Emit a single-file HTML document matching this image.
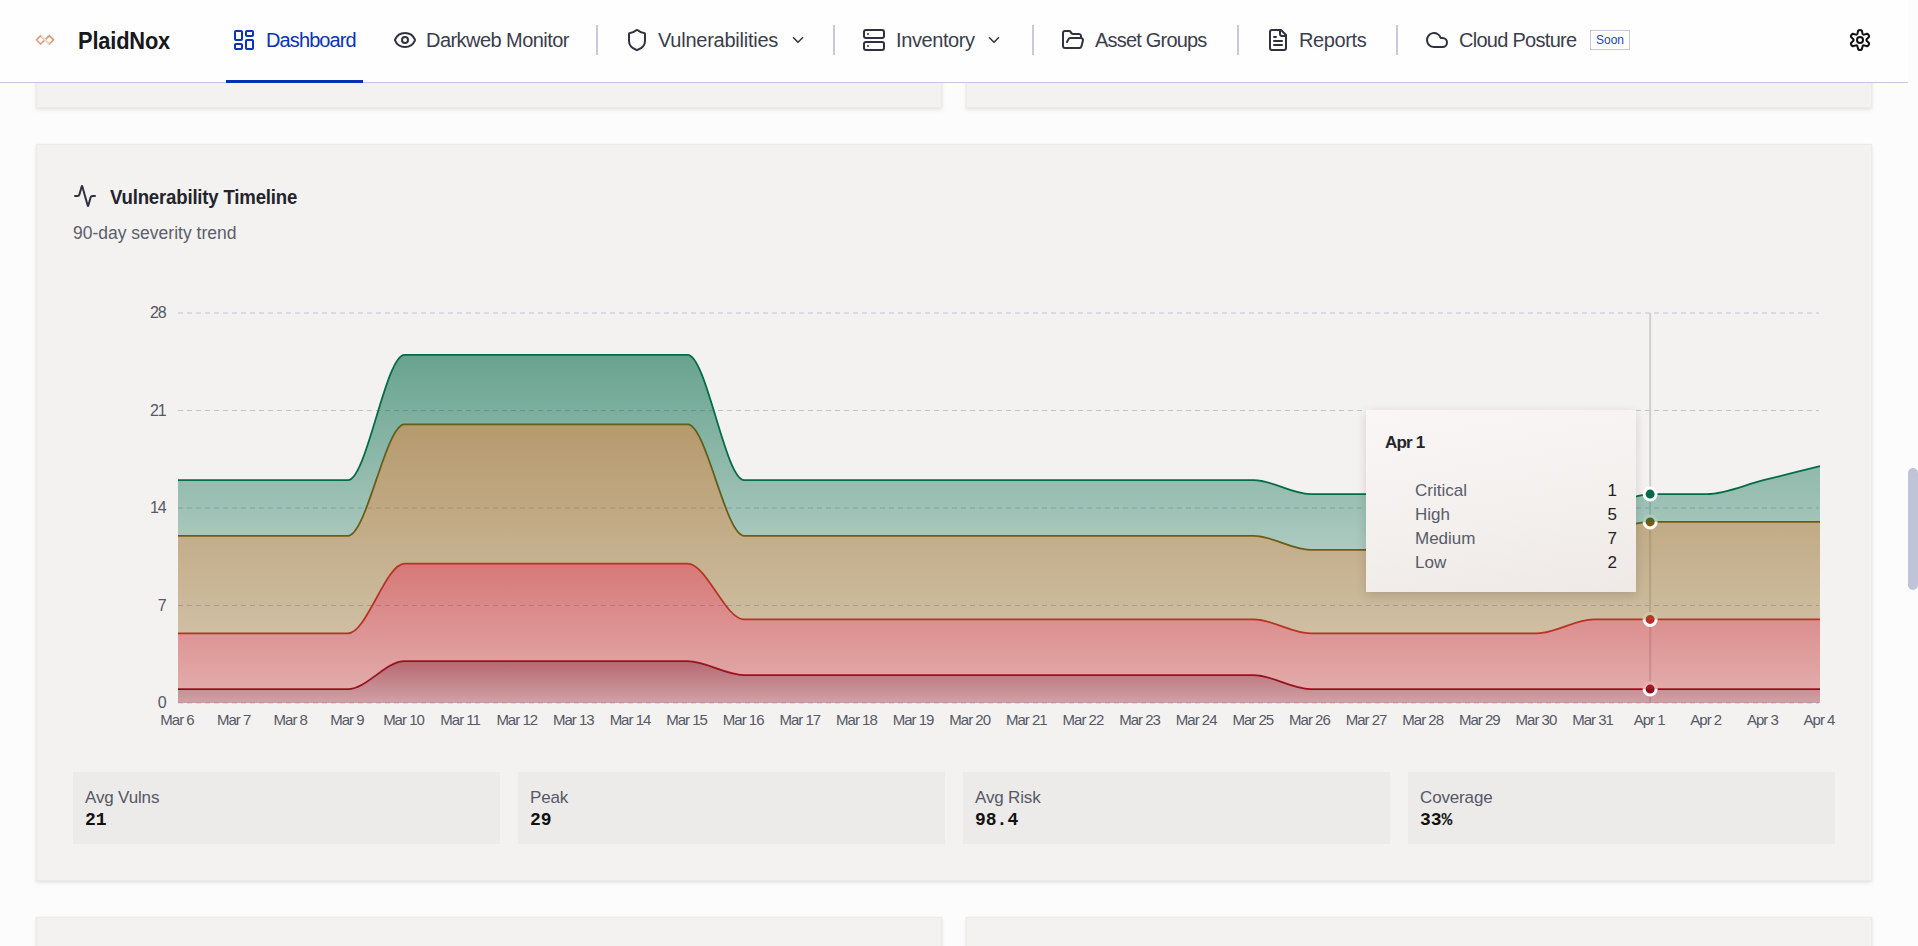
<!DOCTYPE html>
<html><head><meta charset="utf-8">
<style>
*{margin:0;padding:0;box-sizing:border-box}
html,body{width:1918px;height:946px;overflow:hidden;background:#fcfcfc;font-family:"Liberation Sans",sans-serif}
.abs{position:absolute}
#hdr{position:absolute;left:0;top:0;width:1908px;height:83px;background:#fefefe;border-bottom:1px solid #c5c8dc;z-index:5}
.card{position:absolute;background:#f3f2f0;border:1px solid #eceaea;box-shadow:0 2px 4px rgba(0,0,0,0.09),0 0 2px rgba(0,0,0,0.04)}
.nav{position:absolute;top:0;height:82px;font-size:20px;letter-spacing:-0.35px;color:#3b3d4b;white-space:nowrap}
.nav svg{position:absolute}
.nav span{position:absolute;top:30px;line-height:20px}
.sep{position:absolute;top:25px;width:2px;height:30px;background:#c8c9de}
.ic{fill:none;stroke:#2f313e;stroke-width:2;stroke-linecap:round;stroke-linejoin:round}
.stat{position:absolute;top:772px;width:427px;height:72px;background:#edebe9}
.stat .l{position:absolute;left:12px;top:16px;font-size:17px;letter-spacing:-0.15px;color:#555867;line-height:20px}
.stat .v{position:absolute;left:12px;top:38px;font-family:"Liberation Mono",monospace;font-weight:bold;font-size:18px;color:#111;line-height:20px}
#tip{position:absolute;left:1366px;top:410px;width:270px;height:182px;background:linear-gradient(170deg,#f9f6f5 0%,#f2efed 60%,#efe9e6 100%);box-shadow:0 3px 10px rgba(0,0,0,0.14);z-index:3}
#tip .t{position:absolute;left:19px;top:23px;font-size:17px;letter-spacing:-0.8px;font-weight:bold;color:#25252c;line-height:20px}
#tip .r{position:absolute;left:49px;width:202px;font-size:17px;line-height:20px;color:#585b69}
#tip .r b{position:absolute;right:0;top:0;font-weight:normal;color:#222}
</style></head><body>
<!-- top partial cards -->
<div class="card" style="left:36px;top:40px;width:906px;height:68px"></div>
<div class="card" style="left:966px;top:40px;width:906px;height:68px"></div>
<!-- main card -->
<div class="card" style="left:36px;top:144px;width:1836px;height:737px"></div>
<!-- bottom partial cards -->
<div class="card" style="left:36px;top:917px;width:906px;height:100px"></div>
<div class="card" style="left:966px;top:917px;width:906px;height:100px"></div>

<div id="hdr">
  <!-- logo -->
  <svg class="abs" style="left:32px;top:30px" width="24" height="20" viewBox="0 0 24 20">
    <defs><linearGradient id="lg" x1="1" y1="0" x2="0" y2="1"><stop offset="0" stop-color="#d9804c"/><stop offset="1" stop-color="#d9a48a"/></linearGradient></defs>
    <path d="M8.7 5.6 L12.9 9.8 L8.7 14 L4.5 9.8 Z" fill="none" stroke="url(#lg)" stroke-width="1.7" opacity="0.9"/>
    <path d="M17.3 5.6 L21.5 9.8 L17.3 14 L13.1 9.8 Z" fill="none" stroke="url(#lg)" stroke-width="1.7" opacity="0.9"/>
    <path d="M9 5.2 L16.8 14.2" stroke="#e3e0d9" stroke-width="1.8"/>
  </svg>
  <div class="abs" style="left:78px;top:28px;font-size:23.5px;font-weight:bold;color:#17171c;letter-spacing:-0.2px;line-height:26px;transform:scaleX(0.93);transform-origin:0 0">PlaidNox</div>

  <div class="nav" style="left:226px;width:137px">
    <svg style="left:6px;top:28px" width="24" height="24" viewBox="0 0 24 24" class="ic" ><g style="stroke:#0a33b5"><rect width="7" height="9" x="3" y="3" rx="1"/><rect width="7" height="5" x="14" y="3" rx="1"/><rect width="7" height="9" x="14" y="12" rx="1"/><rect width="7" height="5" x="3" y="16" rx="1"/></g></svg>
    <span style="left:40px;color:#0a33b5;letter-spacing:-0.89px">Dashboard</span>
    <div class="abs" style="left:0;top:80px;width:137px;height:3px;background:#0530b5"></div>
  </div>
  <div class="nav" style="left:392px">
    <svg style="left:1px;top:28px" width="24" height="24" viewBox="0 0 24 24" class="ic"><path d="M2.062 12.348a1 1 0 0 1 0-.696 10.75 10.75 0 0 1 19.876 0 1 1 0 0 1 0 .696 10.75 10.75 0 0 1-19.876 0"/><circle cx="12" cy="12" r="3"/></svg>
    <span style="left:34px;letter-spacing:-0.55px">Darkweb Monitor</span>
  </div>
  <div class="sep" style="left:596px"></div>
  <div class="nav" style="left:625px">
    <svg style="left:0px;top:28px" width="24" height="24" viewBox="0 0 24 24" class="ic"><path d="M20 13c0 5-3.5 7.5-7.66 8.95a1 1 0 0 1-.67-.01C7.5 20.5 4 18 4 13V6a1 1 0 0 1 1-1c2 0 4.5-1.2 6.24-2.72a1.17 1.17 0 0 1 1.52 0C14.51 3.81 17 5 19 5a1 1 0 0 1 1 1z"/></svg>
    <span style="left:33px;letter-spacing:-0.25px">Vulnerabilities</span>
    <svg style="left:164px;top:31px" width="18" height="18" viewBox="0 0 24 24" class="ic"><path d="m6 9 6 6 6-6"/></svg>
  </div>
  <div class="sep" style="left:833px"></div>
  <div class="nav" style="left:862px">
    <svg style="left:0px;top:28px" width="24" height="24" viewBox="0 0 24 24" class="ic"><rect width="20" height="8" x="2" y="2" rx="2" ry="2"/><rect width="20" height="8" x="2" y="14" rx="2" ry="2"/><line x1="6" x2="6.01" y1="6" y2="6"/><line x1="6" x2="6.01" y1="18" y2="18"/></svg>
    <span style="left:34px;letter-spacing:-0.4px">Inventory</span>
    <svg style="left:123px;top:31px" width="18" height="18" viewBox="0 0 24 24" class="ic"><path d="m6 9 6 6 6-6"/></svg>
  </div>
  <div class="sep" style="left:1032px"></div>
  <div class="nav" style="left:1061px">
    <svg style="left:0px;top:28px" width="24" height="24" viewBox="0 0 24 24" class="ic"><path d="m6 14 1.5-2.9A2 2 0 0 1 9.24 10H20a2 2 0 0 1 1.94 2.5l-1.54 6a2 2 0 0 1-1.95 1.5H4a2 2 0 0 1-2-2V5a2 2 0 0 1 2-2h3.9a2 2 0 0 1 1.69.9l.81 1.2a2 2 0 0 0 1.67.9H18a2 2 0 0 1 2 2v2"/></svg>
    <span style="left:34px;letter-spacing:-0.8px">Asset Groups</span>
  </div>
  <div class="sep" style="left:1237px"></div>
  <div class="nav" style="left:1266px">
    <svg style="left:0px;top:28px" width="24" height="24" viewBox="0 0 24 24" class="ic"><path d="M15 2H6a2 2 0 0 0-2 2v16a2 2 0 0 0 2 2h12a2 2 0 0 0 2-2V7Z"/><path d="M14 2v4a2 2 0 0 0 2 2h4"/><path d="M10 9H8"/><path d="M16 13H8"/><path d="M16 17H8"/></svg>
    <span style="left:33px;letter-spacing:-0.4px">Reports</span>
  </div>
  <div class="sep" style="left:1396px"></div>
  <div class="nav" style="left:1425px">
    <svg style="left:0px;top:28px" width="24" height="24" viewBox="0 0 24 24" class="ic"><path d="M17.5 19H9a7 7 0 1 1 6.71-9h1.79a4.5 4.5 0 1 1 0 9Z"/></svg>
    <span style="left:34px;letter-spacing:-0.72px">Cloud Posture</span>
  </div>
  <div class="abs" style="left:1590px;top:30px;width:40px;height:20px;border:1px solid #c5c6dc;font-size:12px;color:#1f44b8;text-align:center;line-height:18px">Soon</div>
  <!-- gear -->
  <svg class="abs ic" style="left:1848px;top:28px;stroke:#111;" width="24" height="24" viewBox="0 0 24 24"><path id="gear" d="M9.38,5.83L10.19,2.67Q12.00,1.30 13.81,2.67L14.62,5.83Q15.02,6.78 16.03,6.65L19.17,5.77Q21.27,6.65 20.98,8.91L18.65,11.18Q18.03,12.00 18.65,12.82L20.98,15.09Q21.27,17.35 19.17,18.23L16.03,17.35Q15.02,17.22 14.62,18.17L13.81,21.33Q12.00,22.70 10.19,21.33L9.38,18.17Q8.99,17.22 7.97,17.35L4.83,18.23Q2.73,17.35 3.02,15.09L5.35,12.82Q5.97,12.00 5.35,11.18L3.02,8.91Q2.73,6.65 4.83,5.77L7.97,6.65Q8.99,6.78 9.38,5.83Z"/><circle cx="12" cy="12" r="3"/></svg>
</div>

<!-- chart card content -->
<svg class="abs ic" style="left:73px;top:184px" width="24" height="24" viewBox="0 0 24 24"><path d="M22 12h-2.48a2 2 0 0 0-1.93 1.46l-2.35 8.36a.25.25 0 0 1-.48 0L9.24 2.18a.25.25 0 0 0-.48 0l-2.35 8.36A2 2 0 0 1 4.49 12H2"/></svg>
<div class="abs" style="left:110px;top:186px;font-size:20px;font-weight:bold;color:#23242c;line-height:22px;letter-spacing:-0.2px;transform:scaleX(0.93);transform-origin:0 0">Vulnerability Timeline</div>
<div class="abs" style="left:73px;top:223px;font-size:17.5px;color:#5b5e6b;line-height:20px">90-day severity trend</div>

<svg width="1918" height="946" style="position:absolute;left:0;top:0">
<defs>
<linearGradient id="g_crit" x1="0" y1="0" x2="0" y2="1"><stop offset="0%" stop-color="#8f0d1c" stop-opacity="0.6"/><stop offset="100%" stop-color="#8f0d1c" stop-opacity="0.35"/></linearGradient>
<linearGradient id="g_high" x1="0" y1="0" x2="0" y2="1"><stop offset="0%" stop-color="#c32828" stop-opacity="0.6"/><stop offset="100%" stop-color="#c32828" stop-opacity="0.35"/></linearGradient>
<linearGradient id="g_med" x1="0" y1="0" x2="0" y2="1"><stop offset="0%" stop-color="#8c5f14" stop-opacity="0.6"/><stop offset="100%" stop-color="#8c5f14" stop-opacity="0.35"/></linearGradient>
<linearGradient id="g_low" x1="0" y1="0" x2="0" y2="1"><stop offset="0%" stop-color="#0b6e4f" stop-opacity="0.6"/><stop offset="100%" stop-color="#0b6e4f" stop-opacity="0.3"/></linearGradient>
</defs>
<line x1="178" y1="703.00" x2="1819" y2="703.00" stroke="#c0c1da" stroke-width="1" stroke-dasharray="5 4"/>
<line x1="178" y1="605.50" x2="1819" y2="605.50" stroke="#c0c1da" stroke-width="1" stroke-dasharray="5 4"/>
<line x1="178" y1="508.00" x2="1819" y2="508.00" stroke="#c0c1da" stroke-width="1" stroke-dasharray="5 4"/>
<line x1="178" y1="410.50" x2="1819" y2="410.50" stroke="#c0c1da" stroke-width="1" stroke-dasharray="5 4"/>
<line x1="178" y1="313.00" x2="1819" y2="313.00" stroke="#c0c1da" stroke-width="1" stroke-dasharray="5 4"/>
<line x1="1650.14" y1="313" x2="1650.14" y2="703" stroke="#cfcfcf" stroke-width="2"/>
<path d="M178.00,689.07C196.87,689.07,215.75,689.07,234.62,689.07C253.49,689.07,272.37,689.07,291.24,689.07C310.11,689.07,328.99,689.07,347.86,689.07C366.74,689.07,385.61,661.21,404.48,661.21C423.36,661.21,442.23,661.21,461.10,661.21C479.98,661.21,498.85,661.21,517.72,661.21C536.60,661.21,555.47,661.21,574.34,661.21C593.22,661.21,612.09,661.21,630.97,661.21C649.84,661.21,668.71,661.21,687.59,661.21C706.46,661.21,725.33,675.14,744.21,675.14C763.08,675.14,781.95,675.14,800.83,675.14C819.70,675.14,838.57,675.14,857.45,675.14C876.32,675.14,895.20,675.14,914.07,675.14C932.94,675.14,951.82,675.14,970.69,675.14C989.56,675.14,1008.44,675.14,1027.31,675.14C1046.18,675.14,1065.06,675.14,1083.93,675.14C1102.80,675.14,1121.68,675.14,1140.55,675.14C1159.43,675.14,1178.30,675.14,1197.17,675.14C1216.05,675.14,1234.92,675.14,1253.79,675.14C1272.67,675.14,1291.54,689.07,1310.41,689.07C1329.29,689.07,1348.16,689.07,1367.03,689.07C1385.91,689.07,1404.78,689.07,1423.66,689.07C1442.53,689.07,1461.40,689.07,1480.28,689.07C1499.15,689.07,1518.02,689.07,1536.90,689.07C1555.77,689.07,1574.64,689.07,1593.52,689.07C1612.39,689.07,1631.26,689.07,1650.14,689.07C1669.01,689.07,1687.89,689.07,1706.76,689.07C1725.63,689.07,1744.51,689.07,1763.38,689.07C1782.25,689.07,1801.13,689.07,1820.00,689.07L1820.00,703.00C1801.13,703.00,1782.25,703.00,1763.38,703.00C1744.51,703.00,1725.63,703.00,1706.76,703.00C1687.89,703.00,1669.01,703.00,1650.14,703.00C1631.26,703.00,1612.39,703.00,1593.52,703.00C1574.64,703.00,1555.77,703.00,1536.90,703.00C1518.02,703.00,1499.15,703.00,1480.28,703.00C1461.40,703.00,1442.53,703.00,1423.66,703.00C1404.78,703.00,1385.91,703.00,1367.03,703.00C1348.16,703.00,1329.29,703.00,1310.41,703.00C1291.54,703.00,1272.67,703.00,1253.79,703.00C1234.92,703.00,1216.05,703.00,1197.17,703.00C1178.30,703.00,1159.43,703.00,1140.55,703.00C1121.68,703.00,1102.80,703.00,1083.93,703.00C1065.06,703.00,1046.18,703.00,1027.31,703.00C1008.44,703.00,989.56,703.00,970.69,703.00C951.82,703.00,932.94,703.00,914.07,703.00C895.20,703.00,876.32,703.00,857.45,703.00C838.57,703.00,819.70,703.00,800.83,703.00C781.95,703.00,763.08,703.00,744.21,703.00C725.33,703.00,706.46,703.00,687.59,703.00C668.71,703.00,649.84,703.00,630.97,703.00C612.09,703.00,593.22,703.00,574.34,703.00C555.47,703.00,536.60,703.00,517.72,703.00C498.85,703.00,479.98,703.00,461.10,703.00C442.23,703.00,423.36,703.00,404.48,703.00C385.61,703.00,366.74,703.00,347.86,703.00C328.99,703.00,310.11,703.00,291.24,703.00C272.37,703.00,253.49,703.00,234.62,703.00C215.75,703.00,196.87,703.00,178.00,703.00Z" fill="url(#g_crit)" stroke="none"/>
<path d="M178.00,689.07C196.87,689.07,215.75,689.07,234.62,689.07C253.49,689.07,272.37,689.07,291.24,689.07C310.11,689.07,328.99,689.07,347.86,689.07C366.74,689.07,385.61,661.21,404.48,661.21C423.36,661.21,442.23,661.21,461.10,661.21C479.98,661.21,498.85,661.21,517.72,661.21C536.60,661.21,555.47,661.21,574.34,661.21C593.22,661.21,612.09,661.21,630.97,661.21C649.84,661.21,668.71,661.21,687.59,661.21C706.46,661.21,725.33,675.14,744.21,675.14C763.08,675.14,781.95,675.14,800.83,675.14C819.70,675.14,838.57,675.14,857.45,675.14C876.32,675.14,895.20,675.14,914.07,675.14C932.94,675.14,951.82,675.14,970.69,675.14C989.56,675.14,1008.44,675.14,1027.31,675.14C1046.18,675.14,1065.06,675.14,1083.93,675.14C1102.80,675.14,1121.68,675.14,1140.55,675.14C1159.43,675.14,1178.30,675.14,1197.17,675.14C1216.05,675.14,1234.92,675.14,1253.79,675.14C1272.67,675.14,1291.54,689.07,1310.41,689.07C1329.29,689.07,1348.16,689.07,1367.03,689.07C1385.91,689.07,1404.78,689.07,1423.66,689.07C1442.53,689.07,1461.40,689.07,1480.28,689.07C1499.15,689.07,1518.02,689.07,1536.90,689.07C1555.77,689.07,1574.64,689.07,1593.52,689.07C1612.39,689.07,1631.26,689.07,1650.14,689.07C1669.01,689.07,1687.89,689.07,1706.76,689.07C1725.63,689.07,1744.51,689.07,1763.38,689.07C1782.25,689.07,1801.13,689.07,1820.00,689.07" fill="none" stroke="#8f0d1c" stroke-width="1.75"/>
<circle cx="1650.14" cy="689.07" r="6" fill="#8f0d1c" stroke="#fff" stroke-width="3"/>
<path d="M178.00,633.36C196.87,633.36,215.75,633.36,234.62,633.36C253.49,633.36,272.37,633.36,291.24,633.36C310.11,633.36,328.99,633.36,347.86,633.36C366.74,633.36,385.61,563.71,404.48,563.71C423.36,563.71,442.23,563.71,461.10,563.71C479.98,563.71,498.85,563.71,517.72,563.71C536.60,563.71,555.47,563.71,574.34,563.71C593.22,563.71,612.09,563.71,630.97,563.71C649.84,563.71,668.71,563.71,687.59,563.71C706.46,563.71,725.33,619.43,744.21,619.43C763.08,619.43,781.95,619.43,800.83,619.43C819.70,619.43,838.57,619.43,857.45,619.43C876.32,619.43,895.20,619.43,914.07,619.43C932.94,619.43,951.82,619.43,970.69,619.43C989.56,619.43,1008.44,619.43,1027.31,619.43C1046.18,619.43,1065.06,619.43,1083.93,619.43C1102.80,619.43,1121.68,619.43,1140.55,619.43C1159.43,619.43,1178.30,619.43,1197.17,619.43C1216.05,619.43,1234.92,619.43,1253.79,619.43C1272.67,619.43,1291.54,633.36,1310.41,633.36C1329.29,633.36,1348.16,633.36,1367.03,633.36C1385.91,633.36,1404.78,633.36,1423.66,633.36C1442.53,633.36,1461.40,633.36,1480.28,633.36C1499.15,633.36,1518.02,633.36,1536.90,633.36C1555.77,633.36,1574.64,619.43,1593.52,619.43C1612.39,619.43,1631.26,619.43,1650.14,619.43C1669.01,619.43,1687.89,619.43,1706.76,619.43C1725.63,619.43,1744.51,619.43,1763.38,619.43C1782.25,619.43,1801.13,619.43,1820.00,619.43L1820.00,689.07C1801.13,689.07,1782.25,689.07,1763.38,689.07C1744.51,689.07,1725.63,689.07,1706.76,689.07C1687.89,689.07,1669.01,689.07,1650.14,689.07C1631.26,689.07,1612.39,689.07,1593.52,689.07C1574.64,689.07,1555.77,689.07,1536.90,689.07C1518.02,689.07,1499.15,689.07,1480.28,689.07C1461.40,689.07,1442.53,689.07,1423.66,689.07C1404.78,689.07,1385.91,689.07,1367.03,689.07C1348.16,689.07,1329.29,689.07,1310.41,689.07C1291.54,689.07,1272.67,675.14,1253.79,675.14C1234.92,675.14,1216.05,675.14,1197.17,675.14C1178.30,675.14,1159.43,675.14,1140.55,675.14C1121.68,675.14,1102.80,675.14,1083.93,675.14C1065.06,675.14,1046.18,675.14,1027.31,675.14C1008.44,675.14,989.56,675.14,970.69,675.14C951.82,675.14,932.94,675.14,914.07,675.14C895.20,675.14,876.32,675.14,857.45,675.14C838.57,675.14,819.70,675.14,800.83,675.14C781.95,675.14,763.08,675.14,744.21,675.14C725.33,675.14,706.46,661.21,687.59,661.21C668.71,661.21,649.84,661.21,630.97,661.21C612.09,661.21,593.22,661.21,574.34,661.21C555.47,661.21,536.60,661.21,517.72,661.21C498.85,661.21,479.98,661.21,461.10,661.21C442.23,661.21,423.36,661.21,404.48,661.21C385.61,661.21,366.74,689.07,347.86,689.07C328.99,689.07,310.11,689.07,291.24,689.07C272.37,689.07,253.49,689.07,234.62,689.07C215.75,689.07,196.87,689.07,178.00,689.07Z" fill="url(#g_high)" stroke="none"/>
<path d="M178.00,633.36C196.87,633.36,215.75,633.36,234.62,633.36C253.49,633.36,272.37,633.36,291.24,633.36C310.11,633.36,328.99,633.36,347.86,633.36C366.74,633.36,385.61,563.71,404.48,563.71C423.36,563.71,442.23,563.71,461.10,563.71C479.98,563.71,498.85,563.71,517.72,563.71C536.60,563.71,555.47,563.71,574.34,563.71C593.22,563.71,612.09,563.71,630.97,563.71C649.84,563.71,668.71,563.71,687.59,563.71C706.46,563.71,725.33,619.43,744.21,619.43C763.08,619.43,781.95,619.43,800.83,619.43C819.70,619.43,838.57,619.43,857.45,619.43C876.32,619.43,895.20,619.43,914.07,619.43C932.94,619.43,951.82,619.43,970.69,619.43C989.56,619.43,1008.44,619.43,1027.31,619.43C1046.18,619.43,1065.06,619.43,1083.93,619.43C1102.80,619.43,1121.68,619.43,1140.55,619.43C1159.43,619.43,1178.30,619.43,1197.17,619.43C1216.05,619.43,1234.92,619.43,1253.79,619.43C1272.67,619.43,1291.54,633.36,1310.41,633.36C1329.29,633.36,1348.16,633.36,1367.03,633.36C1385.91,633.36,1404.78,633.36,1423.66,633.36C1442.53,633.36,1461.40,633.36,1480.28,633.36C1499.15,633.36,1518.02,633.36,1536.90,633.36C1555.77,633.36,1574.64,619.43,1593.52,619.43C1612.39,619.43,1631.26,619.43,1650.14,619.43C1669.01,619.43,1687.89,619.43,1706.76,619.43C1725.63,619.43,1744.51,619.43,1763.38,619.43C1782.25,619.43,1801.13,619.43,1820.00,619.43" fill="none" stroke="#c12a29" stroke-width="1.75"/>
<circle cx="1650.14" cy="619.43" r="6" fill="#c12a29" stroke="#fff" stroke-width="3"/>
<path d="M178.00,535.86C196.87,535.86,215.75,535.86,234.62,535.86C253.49,535.86,272.37,535.86,291.24,535.86C310.11,535.86,328.99,535.86,347.86,535.86C366.74,535.86,385.61,424.43,404.48,424.43C423.36,424.43,442.23,424.43,461.10,424.43C479.98,424.43,498.85,424.43,517.72,424.43C536.60,424.43,555.47,424.43,574.34,424.43C593.22,424.43,612.09,424.43,630.97,424.43C649.84,424.43,668.71,424.43,687.59,424.43C706.46,424.43,725.33,535.86,744.21,535.86C763.08,535.86,781.95,535.86,800.83,535.86C819.70,535.86,838.57,535.86,857.45,535.86C876.32,535.86,895.20,535.86,914.07,535.86C932.94,535.86,951.82,535.86,970.69,535.86C989.56,535.86,1008.44,535.86,1027.31,535.86C1046.18,535.86,1065.06,535.86,1083.93,535.86C1102.80,535.86,1121.68,535.86,1140.55,535.86C1159.43,535.86,1178.30,535.86,1197.17,535.86C1216.05,535.86,1234.92,535.86,1253.79,535.86C1272.67,535.86,1291.54,549.79,1310.41,549.79C1329.29,549.79,1348.16,549.79,1367.03,549.79C1385.91,549.79,1404.78,549.79,1423.66,549.79C1442.53,549.79,1461.40,549.79,1480.28,549.79C1499.15,549.79,1518.02,549.79,1536.90,549.79C1555.77,549.79,1574.64,540.50,1593.52,535.86C1612.39,531.21,1631.26,521.93,1650.14,521.93C1669.01,521.93,1687.89,521.93,1706.76,521.93C1725.63,521.93,1744.51,521.93,1763.38,521.93C1782.25,521.93,1801.13,521.93,1820.00,521.93L1820.00,619.43C1801.13,619.43,1782.25,619.43,1763.38,619.43C1744.51,619.43,1725.63,619.43,1706.76,619.43C1687.89,619.43,1669.01,619.43,1650.14,619.43C1631.26,619.43,1612.39,619.43,1593.52,619.43C1574.64,619.43,1555.77,633.36,1536.90,633.36C1518.02,633.36,1499.15,633.36,1480.28,633.36C1461.40,633.36,1442.53,633.36,1423.66,633.36C1404.78,633.36,1385.91,633.36,1367.03,633.36C1348.16,633.36,1329.29,633.36,1310.41,633.36C1291.54,633.36,1272.67,619.43,1253.79,619.43C1234.92,619.43,1216.05,619.43,1197.17,619.43C1178.30,619.43,1159.43,619.43,1140.55,619.43C1121.68,619.43,1102.80,619.43,1083.93,619.43C1065.06,619.43,1046.18,619.43,1027.31,619.43C1008.44,619.43,989.56,619.43,970.69,619.43C951.82,619.43,932.94,619.43,914.07,619.43C895.20,619.43,876.32,619.43,857.45,619.43C838.57,619.43,819.70,619.43,800.83,619.43C781.95,619.43,763.08,619.43,744.21,619.43C725.33,619.43,706.46,563.71,687.59,563.71C668.71,563.71,649.84,563.71,630.97,563.71C612.09,563.71,593.22,563.71,574.34,563.71C555.47,563.71,536.60,563.71,517.72,563.71C498.85,563.71,479.98,563.71,461.10,563.71C442.23,563.71,423.36,563.71,404.48,563.71C385.61,563.71,366.74,633.36,347.86,633.36C328.99,633.36,310.11,633.36,291.24,633.36C272.37,633.36,253.49,633.36,234.62,633.36C215.75,633.36,196.87,633.36,178.00,633.36Z" fill="url(#g_med)" stroke="none"/>
<path d="M178.00,535.86C196.87,535.86,215.75,535.86,234.62,535.86C253.49,535.86,272.37,535.86,291.24,535.86C310.11,535.86,328.99,535.86,347.86,535.86C366.74,535.86,385.61,424.43,404.48,424.43C423.36,424.43,442.23,424.43,461.10,424.43C479.98,424.43,498.85,424.43,517.72,424.43C536.60,424.43,555.47,424.43,574.34,424.43C593.22,424.43,612.09,424.43,630.97,424.43C649.84,424.43,668.71,424.43,687.59,424.43C706.46,424.43,725.33,535.86,744.21,535.86C763.08,535.86,781.95,535.86,800.83,535.86C819.70,535.86,838.57,535.86,857.45,535.86C876.32,535.86,895.20,535.86,914.07,535.86C932.94,535.86,951.82,535.86,970.69,535.86C989.56,535.86,1008.44,535.86,1027.31,535.86C1046.18,535.86,1065.06,535.86,1083.93,535.86C1102.80,535.86,1121.68,535.86,1140.55,535.86C1159.43,535.86,1178.30,535.86,1197.17,535.86C1216.05,535.86,1234.92,535.86,1253.79,535.86C1272.67,535.86,1291.54,549.79,1310.41,549.79C1329.29,549.79,1348.16,549.79,1367.03,549.79C1385.91,549.79,1404.78,549.79,1423.66,549.79C1442.53,549.79,1461.40,549.79,1480.28,549.79C1499.15,549.79,1518.02,549.79,1536.90,549.79C1555.77,549.79,1574.64,540.50,1593.52,535.86C1612.39,531.21,1631.26,521.93,1650.14,521.93C1669.01,521.93,1687.89,521.93,1706.76,521.93C1725.63,521.93,1744.51,521.93,1763.38,521.93C1782.25,521.93,1801.13,521.93,1820.00,521.93" fill="none" stroke="#7d5a0c" stroke-width="1.75"/>
<circle cx="1650.14" cy="521.93" r="6" fill="#7d5a0c" stroke="#fff" stroke-width="3"/>
<path d="M178.00,480.14C196.87,480.14,215.75,480.14,234.62,480.14C253.49,480.14,272.37,480.14,291.24,480.14C310.11,480.14,328.99,480.14,347.86,480.14C366.74,480.14,385.61,354.79,404.48,354.79C423.36,354.79,442.23,354.79,461.10,354.79C479.98,354.79,498.85,354.79,517.72,354.79C536.60,354.79,555.47,354.79,574.34,354.79C593.22,354.79,612.09,354.79,630.97,354.79C649.84,354.79,668.71,354.79,687.59,354.79C706.46,354.79,725.33,480.14,744.21,480.14C763.08,480.14,781.95,480.14,800.83,480.14C819.70,480.14,838.57,480.14,857.45,480.14C876.32,480.14,895.20,480.14,914.07,480.14C932.94,480.14,951.82,480.14,970.69,480.14C989.56,480.14,1008.44,480.14,1027.31,480.14C1046.18,480.14,1065.06,480.14,1083.93,480.14C1102.80,480.14,1121.68,480.14,1140.55,480.14C1159.43,480.14,1178.30,480.14,1197.17,480.14C1216.05,480.14,1234.92,480.14,1253.79,480.14C1272.67,480.14,1291.54,494.07,1310.41,494.07C1329.29,494.07,1348.16,494.07,1367.03,494.07C1385.91,494.07,1404.78,494.07,1423.66,494.07C1442.53,494.07,1461.40,494.07,1480.28,494.07C1499.15,494.07,1518.02,494.07,1536.90,494.07C1555.77,494.07,1574.64,508.00,1593.52,508.00C1612.39,508.00,1631.26,494.07,1650.14,494.07C1669.01,494.07,1687.89,494.07,1706.76,494.07C1725.63,494.07,1744.51,484.79,1763.38,480.14C1782.25,475.50,1801.13,470.86,1820.00,466.21L1820.00,521.93C1801.13,521.93,1782.25,521.93,1763.38,521.93C1744.51,521.93,1725.63,521.93,1706.76,521.93C1687.89,521.93,1669.01,521.93,1650.14,521.93C1631.26,521.93,1612.39,531.21,1593.52,535.86C1574.64,540.50,1555.77,549.79,1536.90,549.79C1518.02,549.79,1499.15,549.79,1480.28,549.79C1461.40,549.79,1442.53,549.79,1423.66,549.79C1404.78,549.79,1385.91,549.79,1367.03,549.79C1348.16,549.79,1329.29,549.79,1310.41,549.79C1291.54,549.79,1272.67,535.86,1253.79,535.86C1234.92,535.86,1216.05,535.86,1197.17,535.86C1178.30,535.86,1159.43,535.86,1140.55,535.86C1121.68,535.86,1102.80,535.86,1083.93,535.86C1065.06,535.86,1046.18,535.86,1027.31,535.86C1008.44,535.86,989.56,535.86,970.69,535.86C951.82,535.86,932.94,535.86,914.07,535.86C895.20,535.86,876.32,535.86,857.45,535.86C838.57,535.86,819.70,535.86,800.83,535.86C781.95,535.86,763.08,535.86,744.21,535.86C725.33,535.86,706.46,424.43,687.59,424.43C668.71,424.43,649.84,424.43,630.97,424.43C612.09,424.43,593.22,424.43,574.34,424.43C555.47,424.43,536.60,424.43,517.72,424.43C498.85,424.43,479.98,424.43,461.10,424.43C442.23,424.43,423.36,424.43,404.48,424.43C385.61,424.43,366.74,535.86,347.86,535.86C328.99,535.86,310.11,535.86,291.24,535.86C272.37,535.86,253.49,535.86,234.62,535.86C215.75,535.86,196.87,535.86,178.00,535.86Z" fill="url(#g_low)" stroke="none"/>
<path d="M178.00,480.14C196.87,480.14,215.75,480.14,234.62,480.14C253.49,480.14,272.37,480.14,291.24,480.14C310.11,480.14,328.99,480.14,347.86,480.14C366.74,480.14,385.61,354.79,404.48,354.79C423.36,354.79,442.23,354.79,461.10,354.79C479.98,354.79,498.85,354.79,517.72,354.79C536.60,354.79,555.47,354.79,574.34,354.79C593.22,354.79,612.09,354.79,630.97,354.79C649.84,354.79,668.71,354.79,687.59,354.79C706.46,354.79,725.33,480.14,744.21,480.14C763.08,480.14,781.95,480.14,800.83,480.14C819.70,480.14,838.57,480.14,857.45,480.14C876.32,480.14,895.20,480.14,914.07,480.14C932.94,480.14,951.82,480.14,970.69,480.14C989.56,480.14,1008.44,480.14,1027.31,480.14C1046.18,480.14,1065.06,480.14,1083.93,480.14C1102.80,480.14,1121.68,480.14,1140.55,480.14C1159.43,480.14,1178.30,480.14,1197.17,480.14C1216.05,480.14,1234.92,480.14,1253.79,480.14C1272.67,480.14,1291.54,494.07,1310.41,494.07C1329.29,494.07,1348.16,494.07,1367.03,494.07C1385.91,494.07,1404.78,494.07,1423.66,494.07C1442.53,494.07,1461.40,494.07,1480.28,494.07C1499.15,494.07,1518.02,494.07,1536.90,494.07C1555.77,494.07,1574.64,508.00,1593.52,508.00C1612.39,508.00,1631.26,494.07,1650.14,494.07C1669.01,494.07,1687.89,494.07,1706.76,494.07C1725.63,494.07,1744.51,484.79,1763.38,480.14C1782.25,475.50,1801.13,470.86,1820.00,466.21" fill="none" stroke="#036b4a" stroke-width="1.75"/>
<circle cx="1650.14" cy="494.07" r="6" fill="#036b4a" stroke="#fff" stroke-width="3"/>
<text x="165.7" y="708.30" text-anchor="end" font-family="Liberation Sans" font-size="16" letter-spacing="-1" fill="#555866">0</text>
<text x="165.7" y="610.80" text-anchor="end" font-family="Liberation Sans" font-size="16" letter-spacing="-1" fill="#555866">7</text>
<text x="165.7" y="513.30" text-anchor="end" font-family="Liberation Sans" font-size="16" letter-spacing="-1" fill="#555866">14</text>
<text x="165.7" y="415.80" text-anchor="end" font-family="Liberation Sans" font-size="16" letter-spacing="-1" fill="#555866">21</text>
<text x="165.7" y="318.30" text-anchor="end" font-family="Liberation Sans" font-size="16" letter-spacing="-1" fill="#555866">28</text>
<text x="177.00" y="725.3" text-anchor="middle" font-family="Liberation Sans" font-size="15" letter-spacing="-1" fill="#555866">Mar 6</text>
<text x="233.62" y="725.3" text-anchor="middle" font-family="Liberation Sans" font-size="15" letter-spacing="-1" fill="#555866">Mar 7</text>
<text x="290.24" y="725.3" text-anchor="middle" font-family="Liberation Sans" font-size="15" letter-spacing="-1" fill="#555866">Mar 8</text>
<text x="346.86" y="725.3" text-anchor="middle" font-family="Liberation Sans" font-size="15" letter-spacing="-1" fill="#555866">Mar 9</text>
<text x="403.48" y="725.3" text-anchor="middle" font-family="Liberation Sans" font-size="15" letter-spacing="-1" fill="#555866">Mar 10</text>
<text x="460.10" y="725.3" text-anchor="middle" font-family="Liberation Sans" font-size="15" letter-spacing="-1" fill="#555866">Mar 11</text>
<text x="516.72" y="725.3" text-anchor="middle" font-family="Liberation Sans" font-size="15" letter-spacing="-1" fill="#555866">Mar 12</text>
<text x="573.34" y="725.3" text-anchor="middle" font-family="Liberation Sans" font-size="15" letter-spacing="-1" fill="#555866">Mar 13</text>
<text x="629.97" y="725.3" text-anchor="middle" font-family="Liberation Sans" font-size="15" letter-spacing="-1" fill="#555866">Mar 14</text>
<text x="686.59" y="725.3" text-anchor="middle" font-family="Liberation Sans" font-size="15" letter-spacing="-1" fill="#555866">Mar 15</text>
<text x="743.21" y="725.3" text-anchor="middle" font-family="Liberation Sans" font-size="15" letter-spacing="-1" fill="#555866">Mar 16</text>
<text x="799.83" y="725.3" text-anchor="middle" font-family="Liberation Sans" font-size="15" letter-spacing="-1" fill="#555866">Mar 17</text>
<text x="856.45" y="725.3" text-anchor="middle" font-family="Liberation Sans" font-size="15" letter-spacing="-1" fill="#555866">Mar 18</text>
<text x="913.07" y="725.3" text-anchor="middle" font-family="Liberation Sans" font-size="15" letter-spacing="-1" fill="#555866">Mar 19</text>
<text x="969.69" y="725.3" text-anchor="middle" font-family="Liberation Sans" font-size="15" letter-spacing="-1" fill="#555866">Mar 20</text>
<text x="1026.31" y="725.3" text-anchor="middle" font-family="Liberation Sans" font-size="15" letter-spacing="-1" fill="#555866">Mar 21</text>
<text x="1082.93" y="725.3" text-anchor="middle" font-family="Liberation Sans" font-size="15" letter-spacing="-1" fill="#555866">Mar 22</text>
<text x="1139.55" y="725.3" text-anchor="middle" font-family="Liberation Sans" font-size="15" letter-spacing="-1" fill="#555866">Mar 23</text>
<text x="1196.17" y="725.3" text-anchor="middle" font-family="Liberation Sans" font-size="15" letter-spacing="-1" fill="#555866">Mar 24</text>
<text x="1252.79" y="725.3" text-anchor="middle" font-family="Liberation Sans" font-size="15" letter-spacing="-1" fill="#555866">Mar 25</text>
<text x="1309.41" y="725.3" text-anchor="middle" font-family="Liberation Sans" font-size="15" letter-spacing="-1" fill="#555866">Mar 26</text>
<text x="1366.03" y="725.3" text-anchor="middle" font-family="Liberation Sans" font-size="15" letter-spacing="-1" fill="#555866">Mar 27</text>
<text x="1422.66" y="725.3" text-anchor="middle" font-family="Liberation Sans" font-size="15" letter-spacing="-1" fill="#555866">Mar 28</text>
<text x="1479.28" y="725.3" text-anchor="middle" font-family="Liberation Sans" font-size="15" letter-spacing="-1" fill="#555866">Mar 29</text>
<text x="1535.90" y="725.3" text-anchor="middle" font-family="Liberation Sans" font-size="15" letter-spacing="-1" fill="#555866">Mar 30</text>
<text x="1592.52" y="725.3" text-anchor="middle" font-family="Liberation Sans" font-size="15" letter-spacing="-1" fill="#555866">Mar 31</text>
<text x="1649.14" y="725.3" text-anchor="middle" font-family="Liberation Sans" font-size="15" letter-spacing="-1" fill="#555866">Apr 1</text>
<text x="1705.76" y="725.3" text-anchor="middle" font-family="Liberation Sans" font-size="15" letter-spacing="-1" fill="#555866">Apr 2</text>
<text x="1762.38" y="725.3" text-anchor="middle" font-family="Liberation Sans" font-size="15" letter-spacing="-1" fill="#555866">Apr 3</text>
<text x="1819.00" y="725.3" text-anchor="middle" font-family="Liberation Sans" font-size="15" letter-spacing="-1" fill="#555866">Apr 4</text>
</svg>

<div id="tip">
  <div class="t">Apr 1</div>
  <div class="r" style="top:71px">Critical<b>1</b></div>
  <div class="r" style="top:95px">High<b>5</b></div>
  <div class="r" style="top:119px">Medium<b>7</b></div>
  <div class="r" style="top:143px">Low<b>2</b></div>
</div>

<div class="stat" style="left:73px"><div class="l">Avg Vulns</div><div class="v">21</div></div>
<div class="stat" style="left:518px"><div class="l">Peak</div><div class="v">29</div></div>
<div class="stat" style="left:963px"><div class="l">Avg Risk</div><div class="v">98.4</div></div>
<div class="stat" style="left:1408px"><div class="l">Coverage</div><div class="v">33%</div></div>

<!-- scrollbar -->
<div class="abs" style="left:1908px;top:468px;width:10px;height:122px;border-radius:5px;background:#c1c3d9"></div>
</body></html>
